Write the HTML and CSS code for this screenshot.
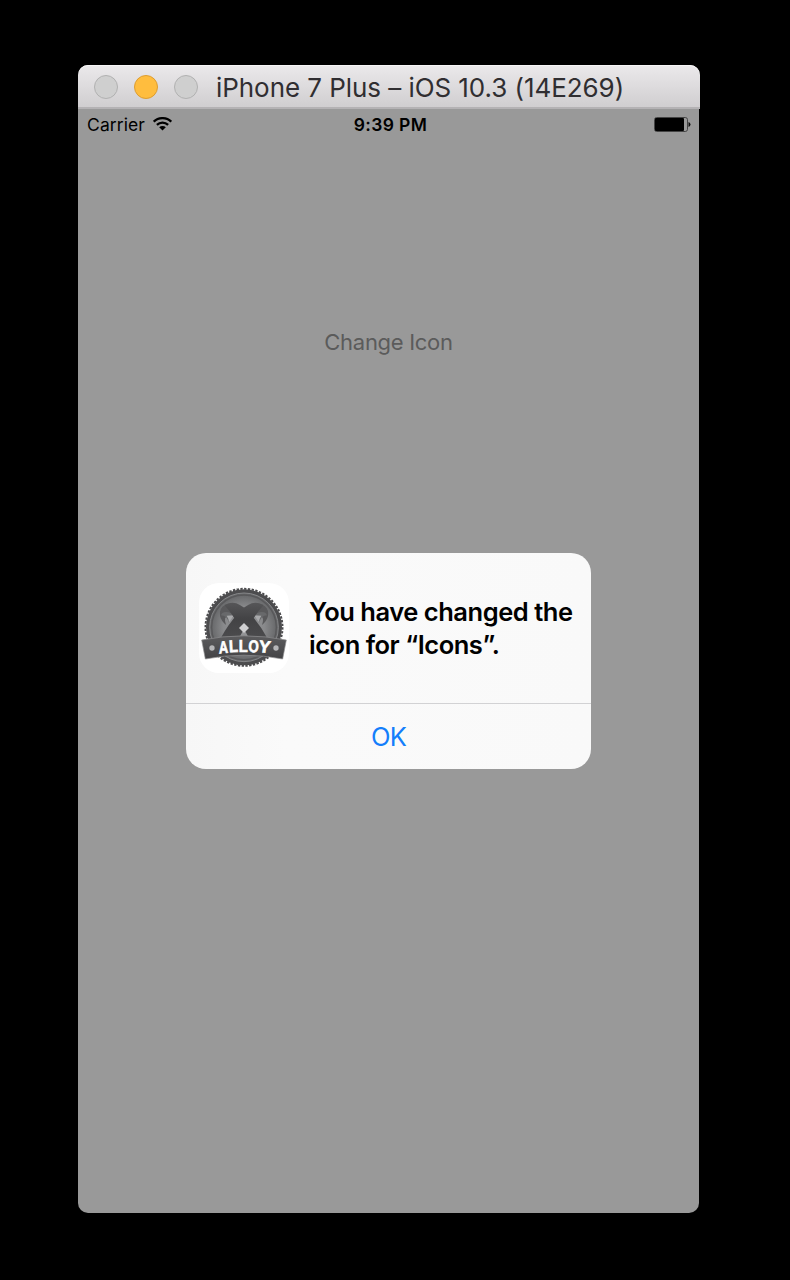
FILE: index.html
```html
<!DOCTYPE html>
<html lang="en">
<head>
<meta charset="utf-8">
<title>Simulator</title>
<link rel="stylesheet" href="styles.css">
</head>
<body>
<main class="window">
  <header class="titlebar">
    <div class="lights"><i class="light"></i><i class="light light-min"></i><i class="light"></i></div>
    <h1 class="title">iPhone 7 Plus – iOS 10.3 (14E269)</h1>
  </header>
  <section class="screen">
    <div class="status">
      <div class="status-left">
        <span class="carrier">Carrier</span>
        <svg class="wifi" width="19" height="14" viewBox="0 0 19 14" fill="none" stroke="#000" stroke-width="2.3">
          <path d="M.8 4.7a12.4 12.4 0 0 1 17.4 0M3.9 7.9a8 8 0 0 1 11.2 0"/>
          <path d="M6.2 10.3a4.7 4.7 0 0 1 6.6 0L9.5 13.6z" fill="#000" stroke="none"/>
        </svg>
      </div>
      <span class="time">9:39 PM</span>
      <svg class="battery" width="37" height="15" viewBox="0 0 37 15">
        <rect x=".5" y=".5" width="33" height="14" rx="2.2" fill="none" stroke="#444"/>
        <rect x="1" y="1" width="29" height="13" rx="1" fill="#000"/>
        <path d="M34.5 5q2 .6 2 2.5t-2 2.5z" fill="#111"/>
      </svg>
    </div>
    <div class="change">Change Icon</div>
    <div class="alert">
      <div class="alert-body">
        <svg class="app-icon" viewBox="28 24 270 270">
          <defs>
            <radialGradient id="disc"><stop offset="0" stop-color="#9a9b9d"/><stop offset=".6" stop-color="#88898b"/><stop offset="1" stop-color="#626365"/></radialGradient>
            <linearGradient id="band" x1="0" y1="0" x2="0" y2="1"><stop offset="0" stop-color="#5c5c5e"/><stop offset="1" stop-color="#434345"/></linearGradient>
            <linearGradient id="strap" x1="0" y1="0" x2="0" y2="1"><stop offset="0" stop-color="#565658"/><stop offset=".45" stop-color="#434345"/><stop offset="1" stop-color="#4b4b4d"/></linearGradient>
          </defs>
          <rect x="28" y="24" width="270" height="270" rx="60" fill="#fff"/>
          <circle cx="163" cy="157" r="114" fill="#4c4c4e"/>
          <circle cx="163" cy="157" r="115.500" fill="none" stroke="#4c4c4e" stroke-width="6" pathLength="144" stroke-dasharray="1.400 .850"/>
          <circle cx="163" cy="157" r="103" fill="url(#disc)" stroke="#858688" stroke-width="3"/>
          <circle cx="163" cy="157" r="97" fill="none" stroke="#58585a" stroke-width="4"/>
          <path d="M108 89Q87 98 91 123Q94 137 109 150Q100 125 116 122L132 124L138 107Z" fill="#59595b"/>
          <path d="M218 89Q239 98 235 123Q232 137 217 150Q226 125 210 122L194 124L188 107Z" fill="#59595b"/>
          <path d="M94 121Q98 108 117 112Q130 115 136 125Q122 124 118 143Q111 121 94 121Z" fill="#68696b"/>
          <path d="M232 121Q228 108 209 112Q196 115 190 125Q204 124 208 143Q215 121 232 121Z" fill="#68696b"/>
          <path d="M111 122L133 121L118 142Q117 130 111 122ZM215 122L193 121L208 142Q209 130 215 122Z" fill="#a9aaac"/>
          <path d="M222 90Q201 79 186 85Q160 96 146 115Q116 147 93 190H148L163 161L192 129Q206 107 222 90Z" fill="url(#strap)"/>
          <path d="M104 90Q125 79 140 85Q166 96 180 115Q210 147 233 190H178L163 161L134 129Q120 107 104 90Z" fill="url(#strap)"/>
          <path d="M163 144l15 15-15 15-15-15z" fill="#d0d0d2"/>
          <path d="M36 195q127-25 254 0l-11 57q-116-23-232 0z" fill="url(#band)" stroke="#929294" stroke-width="2"/>
          <circle cx="67" cy="219" r="8" fill="#b6b6b8"/><circle cx="259" cy="219" r="8" fill="#b6b6b8"/>
          <g class="badge-text">
            <text transform="translate(88 236) rotate(-6) skewX(-4)" textLength="28" lengthAdjust="spacingAndGlyphs">A</text>
            <text transform="translate(119 232) rotate(-3)" textLength="27" lengthAdjust="spacingAndGlyphs">L</text>
            <text transform="translate(147 231)" textLength="27" lengthAdjust="spacingAndGlyphs">L</text>
            <text transform="translate(176 231) rotate(2)" textLength="31" lengthAdjust="spacingAndGlyphs">O</text>
            <text transform="translate(205 231) rotate(6) skewX(-2)" textLength="35" lengthAdjust="spacingAndGlyphs">Y</text>
          </g>
        </svg>
        <p class="message">You have changed the<br><span class="message-end">icon for “Icons”.</span></p>
      </div>
      <div class="ok"><span>OK</span></div>
    </div>
  </section>
</main>
</body>
</html>
```
FILE: styles.css
```css
* { box-sizing: border-box; }
body { margin: 0; min-height: 1280px; padding: 65px 0 0 78px; background: #000; font-family: Inter, "Liberation Sans", sans-serif; }
.window { width: 622px; }
.titlebar { height: 44px; display: flex; align-items: center; padding-left: 16px; gap: 18px; background: linear-gradient(#ebe9eb, #d0ced0); border-radius: 10px 10px 0 0; border-bottom: 2px solid #b4b2b4; box-shadow: inset 0 1px #f6f5f6; }
.lights { display: flex; gap: 16px; padding-top: 1px; }
.light { width: 24px; height: 24px; border-radius: 50%; background: #cfcfcf; border: 1px solid #b1b1b1; }
.light-min { background: #ffbd3e; border-color: #dd9d31; }
.title { margin: 3px 0 0; font-size: 26px; line-height: 32px; font-weight: 400; letter-spacing: -.06px; color: #302e31; white-space: nowrap; }
.screen { width: 621px; height: 1104px; background: #999; border-radius: 0 0 10px 10px; display: flex; flex-direction: column; align-items: center; }
.status { width: 100%; height: 31px; padding: 0 8px 0 9px; display: grid; grid-template-columns: 1fr auto 1fr; align-items: center; font-size: 17.5px; color: #000; }
.status-left { display: flex; align-items: center; gap: 8px; }
.carrier { letter-spacing: .1px; }
.wifi { margin-top: -2px; }
.time { font-weight: 600; font-size: 17.5px; letter-spacing: .35px; padding-left: 3px; }
.battery { justify-self: end; }
.change { margin-top: 186px; height: 32px; line-height: 32px; font-size: 22px; letter-spacing: -.3px; color: #5b5b5b; }
.alert { width: 405px; height: 216px; margin-top: 195px; border-radius: 20px; background: linear-gradient(90deg, #f7f7f7, #fafafa 25%, #f9f9f9); }
.alert-body { height: 151px; border-bottom: 1px solid #d2d2d4; display: flex; align-items: center; gap: 20px; padding: 0 0 1px 13px; }
.app-icon { width: 90px; height: 90px; flex: none; }
.badge-text { fill: #fff; stroke: #fff; stroke-width: 2; font: 700 51px "Liberation Sans", sans-serif; }
.message { margin: 0; font-size: 25.5px; line-height: 33px; font-weight: 600; letter-spacing: -.47px; white-space: nowrap; color: #000; }
.ok { height: 65px; display: grid; place-items: center; font-size: 25.5px; color: #147efb; letter-spacing: -.7px; padding-top: 0; }
```
